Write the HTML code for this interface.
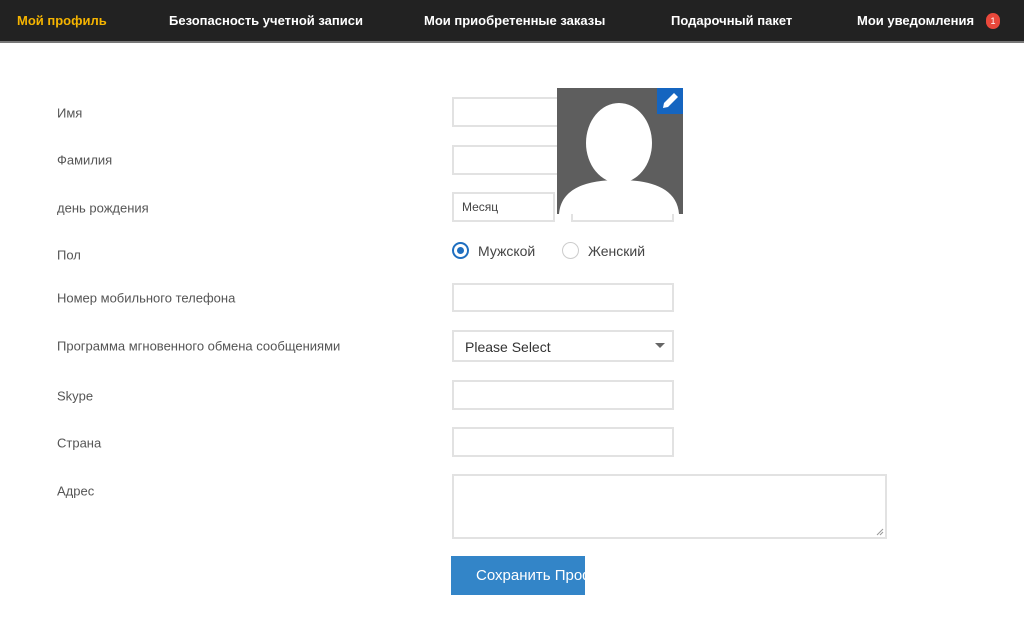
<!DOCTYPE html>
<html><head><meta charset="utf-8"><style>
*{margin:0;padding:0;box-sizing:border-box}
body{width:1024px;height:635px;background:#fff;font-family:"Liberation Sans","DejaVu Sans",sans-serif;position:relative;overflow:hidden}
.nav{position:absolute;left:0;top:0;width:1024px;height:43px;background:#222;border-bottom:2px solid #777}
.nav span{position:absolute;top:13px;font-size:13px;font-weight:bold;color:#fff;white-space:nowrap}
.lbl{position:absolute;left:57px;font-size:13px;color:#555;transform:translateY(-50%)}
.in{position:absolute;border:2px solid #e2e2e2;background:#fff}
.t{position:absolute;font-size:13px;color:#444;transform:translateY(-50%)}
</style></head><body>
<div class="nav">
<span style="left:17px;color:#f5b400">Мой профиль</span>
<span style="left:169px">Безопасность учетной записи</span>
<span style="left:424px">Мои приобретенные заказы</span>
<span style="left:671px">Подарочный пакет</span>
<span style="left:857px">Мои уведомления</span>
<div style="position:absolute;left:986px;top:13px;width:14px;height:16px;border-radius:7px;background:#e9483b;color:#fff;font-size:9px;text-align:center;line-height:16px">1</div>
</div>
<div class="lbl" style="top:113px">Имя</div>
<div class="lbl" style="top:160px">Фамилия</div>
<div class="lbl" style="top:208px">день рождения</div>
<div class="lbl" style="top:255px">Пол</div>
<div class="lbl" style="top:298px">Номер мобильного телефона</div>
<div class="lbl" style="top:346px">Программа мгновенного обмена сообщениями</div>
<div class="lbl" style="top:396px">Skype</div>
<div class="lbl" style="top:443px">Страна</div>
<div class="lbl" style="top:491px">Адрес</div>

<div class="in" style="left:452px;top:97px;width:222px;height:30px"></div>
<div class="in" style="left:452px;top:145px;width:222px;height:30px"></div>
<div class="in" style="left:452px;top:192px;width:103px;height:30px"></div>
<div class="t" style="left:462px;top:207px;font-size:12px">Месяц</div>
<div class="in" style="left:571px;top:192px;width:103px;height:30px"></div>
<div class="t" style="left:581px;top:207px;font-size:12px;color:#bbb">День</div>

<div style="position:absolute;left:452px;top:242px;width:17px;height:17px;border-radius:50%;border:2px solid #1f6fc0"></div>
<div style="position:absolute;left:457px;top:247px;width:7px;height:7px;border-radius:50%;background:#1f6fc0"></div>
<div class="t" style="left:478px;top:251px;font-size:14px">Мужской</div>
<div style="position:absolute;left:562px;top:242px;width:17px;height:17px;border-radius:50%;border:1px solid #ccc"></div>
<div class="t" style="left:588px;top:251px;font-size:14px">Женский</div>

<div class="in" style="left:452px;top:283px;width:222px;height:29px"></div>
<div class="in" style="left:452px;top:330px;width:222px;height:32px"></div>
<div class="t" style="left:465px;top:347px;font-size:14px;color:#333">Please Select</div>
<div style="position:absolute;left:655px;top:343px;border-left:5px solid transparent;border-right:5px solid transparent;border-top:5px solid #666"></div>
<div class="in" style="left:452px;top:380px;width:222px;height:30px"></div>
<div class="in" style="left:452px;top:427px;width:222px;height:30px"></div>
<div class="in" style="left:452px;top:474px;width:435px;height:65px"></div>
<svg style="position:absolute;left:876px;top:528px" width="8" height="8"><path d="M1 7L7 1M4 7L7 4" stroke="#999" stroke-width="1"/></svg>

<div style="position:absolute;left:451px;top:556px;width:134px;height:39px;background:#3385c8;color:#fff;font-size:15px;line-height:40px;padding-left:25px;white-space:nowrap;overflow:hidden">Сохранить Профиль</div>

<svg style="position:absolute;left:557px;top:88px" width="126" height="126">
<rect width="126" height="126" fill="#5e5e5e"/>
<ellipse cx="62" cy="55" rx="33" ry="40" fill="#fff"/>
<path d="M2 126 C4 100 30 92 62 92 C94 92 120 100 122 126Z" fill="#fff"/>
<rect x="100" y="0" width="26" height="26" fill="#1565c0"/>
<path d="M106 20 L107 15 L117 5 L121 9 L111 19 Z" fill="#fff"/>
</svg>
</body></html>
